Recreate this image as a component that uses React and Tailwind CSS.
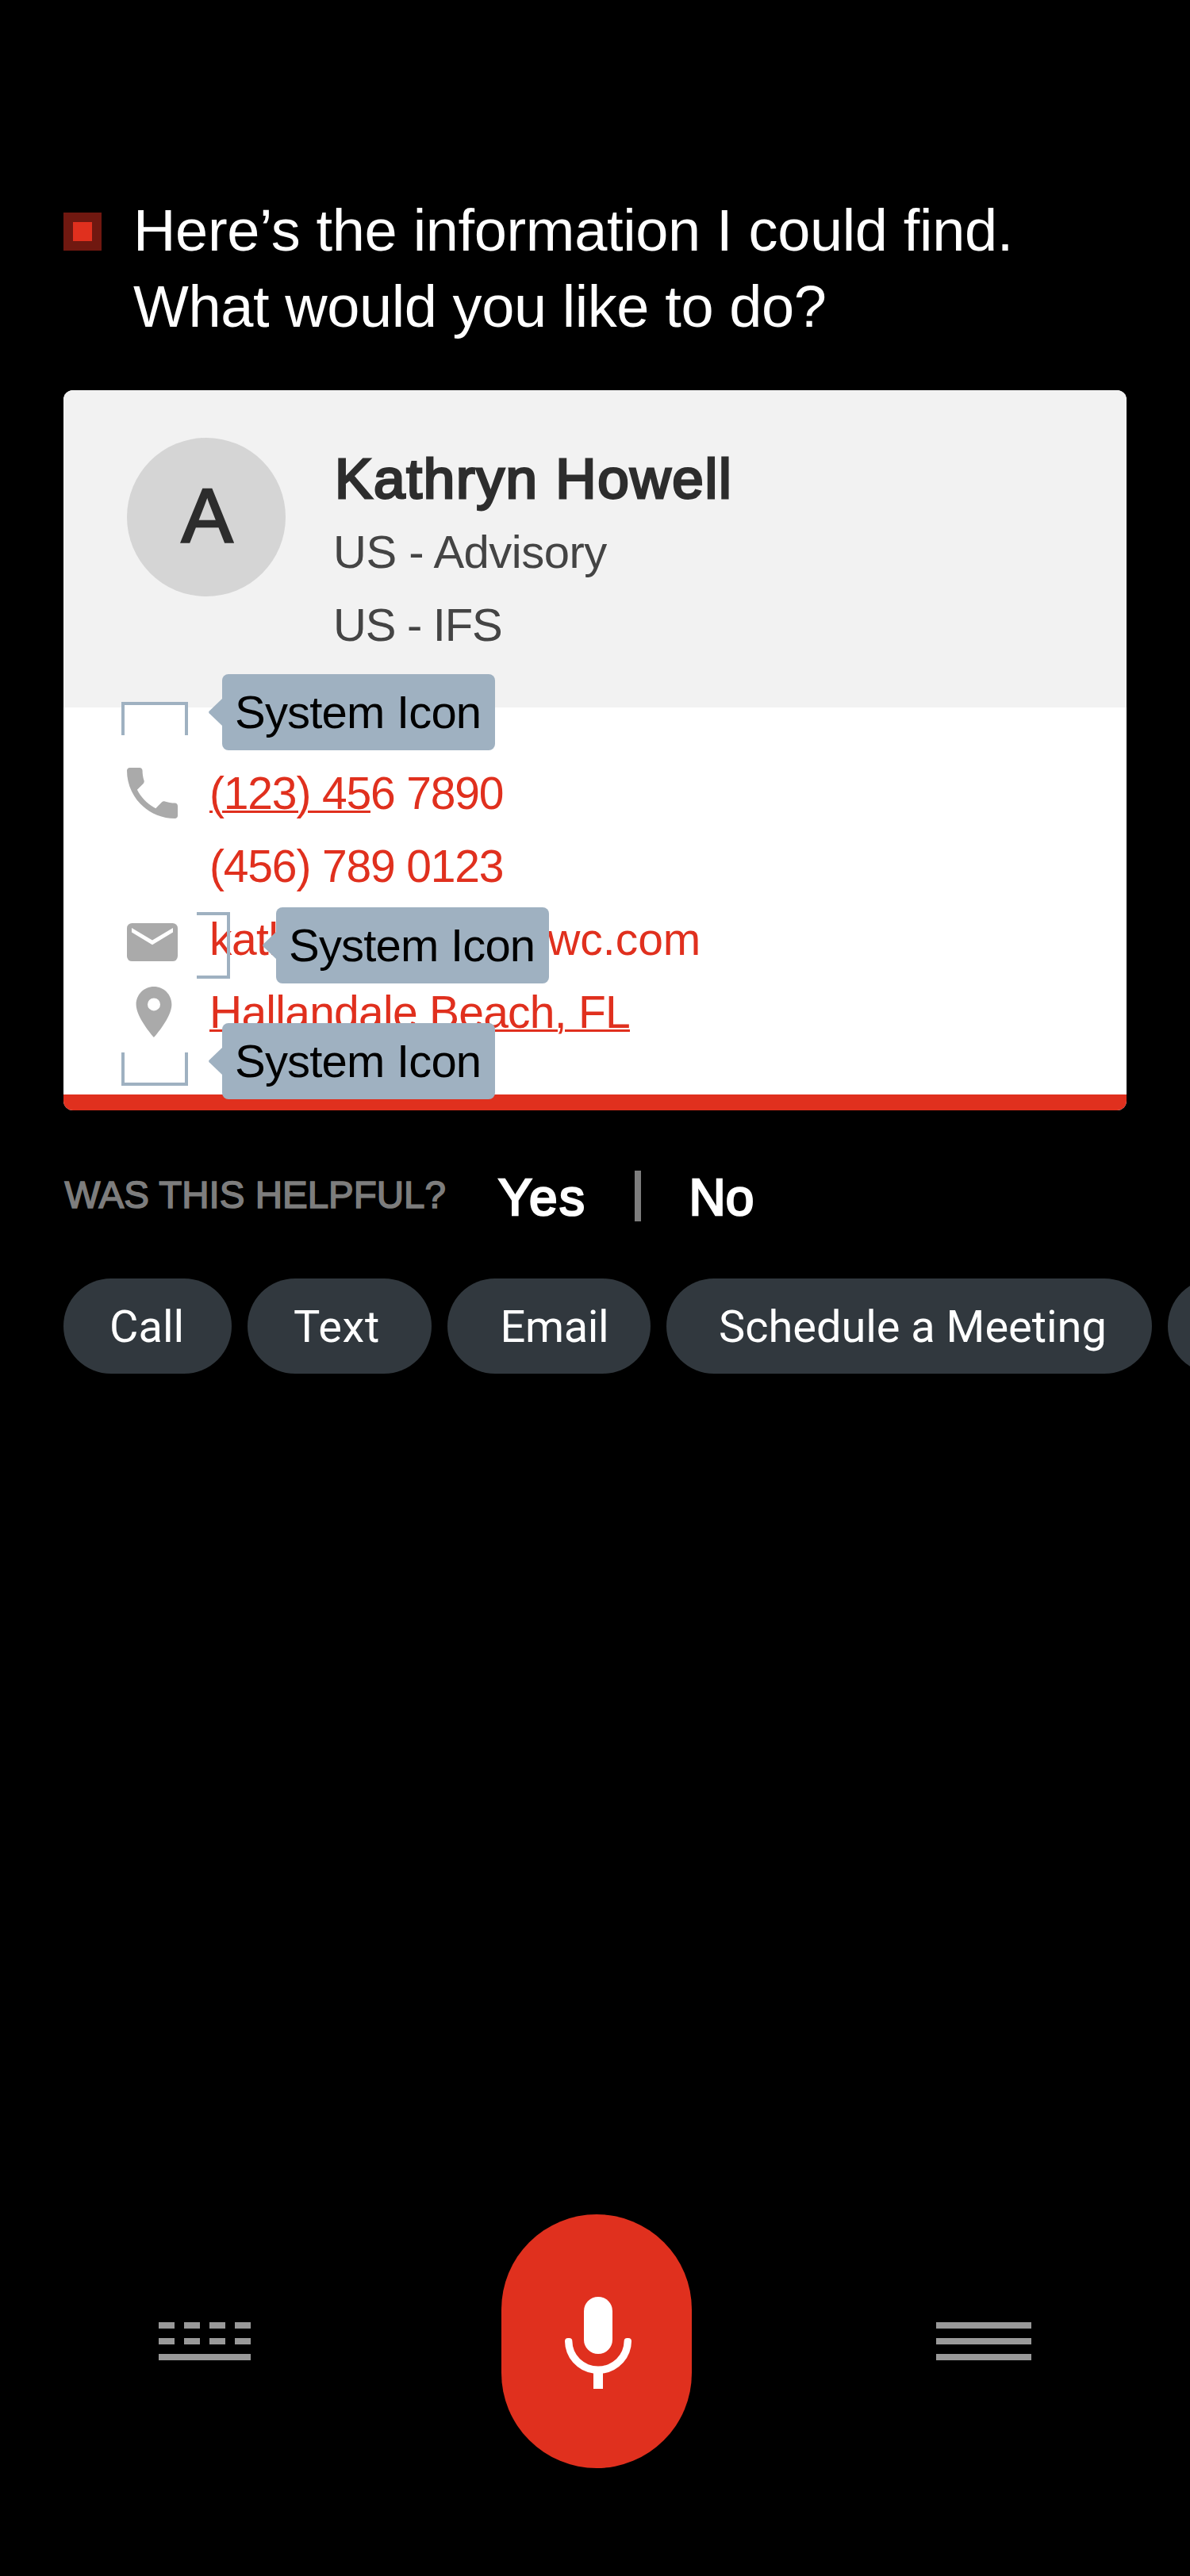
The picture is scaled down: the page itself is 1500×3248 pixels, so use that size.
import React from 'react';

function PhoneIcon() {
  return (
    <svg className="h-16 w-16" viewBox="3 3 18 18" fill="#aaaaaa">
      <path d="M6.62 10.79c1.44 2.83 3.76 5.14 6.59 6.59l2.2-2.2c.27-.27.67-.36 1.02-.24 1.12.37 2.33.57 3.57.57.55 0 1 .45 1 1V20c0 .55-.45 1-1 1-9.39 0-17-7.61-17-17 0-.55.45-1 1-1h3.5c.55 0 1 .45 1 1 0 1.25.2 2.45.57 3.57.11.35.03.74-.25 1.02l-2.2 2.2z" />
    </svg>
  );
}

function MailIcon() {
  return (
    <svg className="mt-2 h-12 w-16" viewBox="0 0 64 48">
      <rect width="64" height="48" rx="6.4" fill="#aaaaaa" />
      <path d="M6 6L32 21.6L58 6V11.6L32 27.2L6 11.6Z" fill="#ffffff" />
    </svg>
  );
}

function PinIcon() {
  return (
    <svg className="ml-[2px] h-16 w-16" viewBox="2 2 20 20" fill="#aaaaaa">
      <path d="M12 2C8.13 2 5 5.13 5 9c0 5.25 7 13 7 13s7-7.75 7-13c0-3.87-3.13-7-7-7zm0 9.5a2.5 2.5 0 0 1 0-5 2.5 2.5 0 0 1 0 5z" />
    </svg>
  );
}

function MicIcon() {
  return (
    <svg className="h-[116px] w-[84px]" viewBox="0 0 84 116">
      <rect x="24" y="0" width="36" height="72" rx="18" fill="#ffffff" />
      <path
        d="M0 56Q0 52 4 52H5.4Q9.4 52 9.4 56A32.6 31.6 0 0 0 74.6 56Q74.6 52 78.6 52H80Q84 52 84 56A42 41 0 0 1 48 96.5V116H36V96.5A42 41 0 0 1 0 56Z"
        fill="#ffffff"
      />
    </svg>
  );
}

function KeyboardIcon() {
  return (
    <div className="flex w-[116px] flex-col gap-3">
      {[0, 1].map((row) => (
        <div key={row} className="flex gap-3">
          {[0, 1, 2, 3].map((k) => (
            <div key={k} className="h-2 w-5 bg-[#999999]" />
          ))}
        </div>
      ))}
      <div className="h-2 bg-[#999999]" />
    </div>
  );
}

function MenuIcon() {
  return (
    <div className="flex w-[120px] flex-col gap-3">
      <div className="h-2 bg-[#999999]" />
      <div className="h-2 bg-[#999999]" />
      <div className="h-2 bg-[#999999]" />
    </div>
  );
}

function Tag({ className }) {
  return (
    <div
      className={`absolute h-24 w-[344px] rounded-lg bg-[#9fb1c1] pl-4 text-[58px] leading-[96px] tracking-[-0.8px] whitespace-nowrap text-black ${className}`}
    >
      <svg className="absolute top-[31px] -left-[17px] h-[34px] w-[17px]" viewBox="0 0 17 34">
        <path d="M17 0V34L0.6 18.2Q-0.4 17 0.6 15.8Z" fill="#9fb1c1" />
      </svg>
      System Icon
    </div>
  );
}

function ContactRow({ icon, children, className = '' }) {
  return (
    <div className="flex h-[92px] items-center">
      <div className="flex w-[104px] items-center">{icon}</div>
      <div className={`text-[57px] leading-[92px] whitespace-nowrap ${className}`}>{children}</div>
    </div>
  );
}

function ContactCard() {
  return (
    <section className="relative mt-[57px] mr-20 ml-20 h-[908px]">
      <div className="flex h-full flex-col overflow-hidden rounded-xl bg-white">
        <header className="flex h-[400px] shrink-0 bg-[#f2f2f2] pl-20">
          <div className="mt-[60px] flex h-[200px] w-[200px] items-center justify-center rounded-full bg-[#d5d5d5]">
            <span className="pb-1 pl-[2px] text-[97px] leading-[200px] text-[#2d2d2d] [-webkit-text-stroke:2.6px_#2d2d2d]">A</span>
          </div>
          <div className="mt-[65px] ml-[60px] whitespace-nowrap">
            <h2 className="pl-[2px] text-[71px] leading-[93px] tracking-[1.72px] text-[#2d2d2d] [-webkit-text-stroke:3px_#2d2d2d]">
              Kathryn Howell
            </h2>
            <p className="text-[58px] leading-[92px] tracking-[-0.5px] text-[#444444]">US - Advisory</p>
            <p className="text-[58px] leading-[92px] tracking-[-1.25px] text-[#444444]">US - IFS</p>
          </div>
        </header>
        <div className="grow pt-[62px] pl-20 text-[#e0301e]">
          <ContactRow icon={<PhoneIcon />} className="tracking-[-1.17px]">
            <span className="underline decoration-[3px] underline-offset-[2px]">(123) 45</span>6 7890
          </ContactRow>
          <ContactRow className="tracking-[-1.17px]">(456) 789 0123</ContactRow>
          <ContactRow icon={<MailIcon />}>
            <span className="tracking-[-0.6px]">kat</span>
            <span className="tracking-[-2px]">hryn.howell@p</span>
            <span>wc.com</span>
          </ContactRow>
          <ContactRow icon={<PinIcon />} className="tracking-[-0.75px]">
            <span className="underline decoration-[3px] underline-offset-[2px]">Hallandale Beach, FL</span>
          </ContactRow>
        </div>
        <div className="h-5 shrink-0 bg-[#e0301e]" />
      </div>

      <div className="absolute top-[393px] left-[73px] h-[42px] w-[84px] border-4 border-b-0 border-[#9fb1c1] bg-white" />
      <Tag className="top-[358px] left-[200px]" />
      <div className="absolute top-[658px] left-[168px] h-[84px] w-[42px] border-4 border-l-0 border-[#9fb1c1]" />
      <Tag className="top-[652px] left-[268px]" />
      <div className="absolute top-[835px] left-[73px] h-[42px] w-[84px] border-4 border-t-0 border-[#9fb1c1]" />
      <Tag className="top-[798px] left-[200px]" />
    </section>
  );
}

function Chip({ className = '', children }) {
  return (
    <button
      className={`h-[120px] shrink-0 rounded-full bg-[#31383e] text-left font-[Roboto,sans-serif] text-[56px] leading-[122px] whitespace-nowrap text-white ${className}`}
    >
      {children}
    </button>
  );
}

export default function App() {
  return (
    <main className="flex h-[3248px] w-[1500px] flex-col overflow-hidden bg-black font-['Liberation_Sans',Arial,sans-serif]">
      <div className="mt-[243px] flex pl-20">
        <div className="mt-[25px] flex h-12 w-12 items-center justify-center bg-[#701810]">
          <div className="h-6 w-6 bg-[#e0301e]" />
        </div>
        <h1 className="ml-10 text-[74px] leading-[96px] whitespace-nowrap text-white">
          <span className="block tracking-[-0.35px]">Here’s the information I could find.</span>
          <span className="block tracking-[-0.42px]">What would you like to do?</span>
        </h1>
      </div>

      <ContactCard />

      <div className="mt-[76px] flex h-16 items-center pl-20">
        <div className="w-[548px] pb-[3px] pl-[1.5px] text-[47.5px] leading-[61px] whitespace-nowrap text-[#7d7d7d] [-webkit-text-stroke:1.6px_#7d7d7d]">
          WAS THIS HELPFUL?
        </div>
        <button className="mt-1 w-[172px] text-left text-[64px] leading-[64px] tracking-[2.3px] text-white [-webkit-text-stroke:2.6px_#ffffff]">
          Yes
        </button>
        <div className="h-16 w-2 bg-[#7d7d7d]" />
        <button className="mt-1 ml-[60.5px] text-[64px] leading-[64px] text-white [-webkit-text-stroke:2.6px_#ffffff]">No</button>
      </div>

      <div className="mt-[72px] flex h-[120px] gap-5 pl-20">
        <Chip className="w-[212px] pl-[58px]">Call</Chip>
        <Chip className="w-[232px] pl-[58px] tracking-[0.6px]">Text</Chip>
        <Chip className="w-[256px] pl-[66.5px] tracking-[-0.4px]">Email</Chip>
        <Chip className="w-[612px] pl-[66px] tracking-[-0.05px]">Schedule a Meeting</Chip>
        <Chip className="w-[256px]" />
      </div>

      <nav className="mt-auto mb-[136px] flex h-80 items-center pl-[200px]">
        <KeyboardIcon />
        <button className="mr-[308px] ml-[316px] flex h-80 w-60 items-center justify-center rounded-full bg-[#e0301e] pt-1 pl-1">
          <MicIcon />
        </button>
        <MenuIcon />
      </nav>
    </main>
  );
}
